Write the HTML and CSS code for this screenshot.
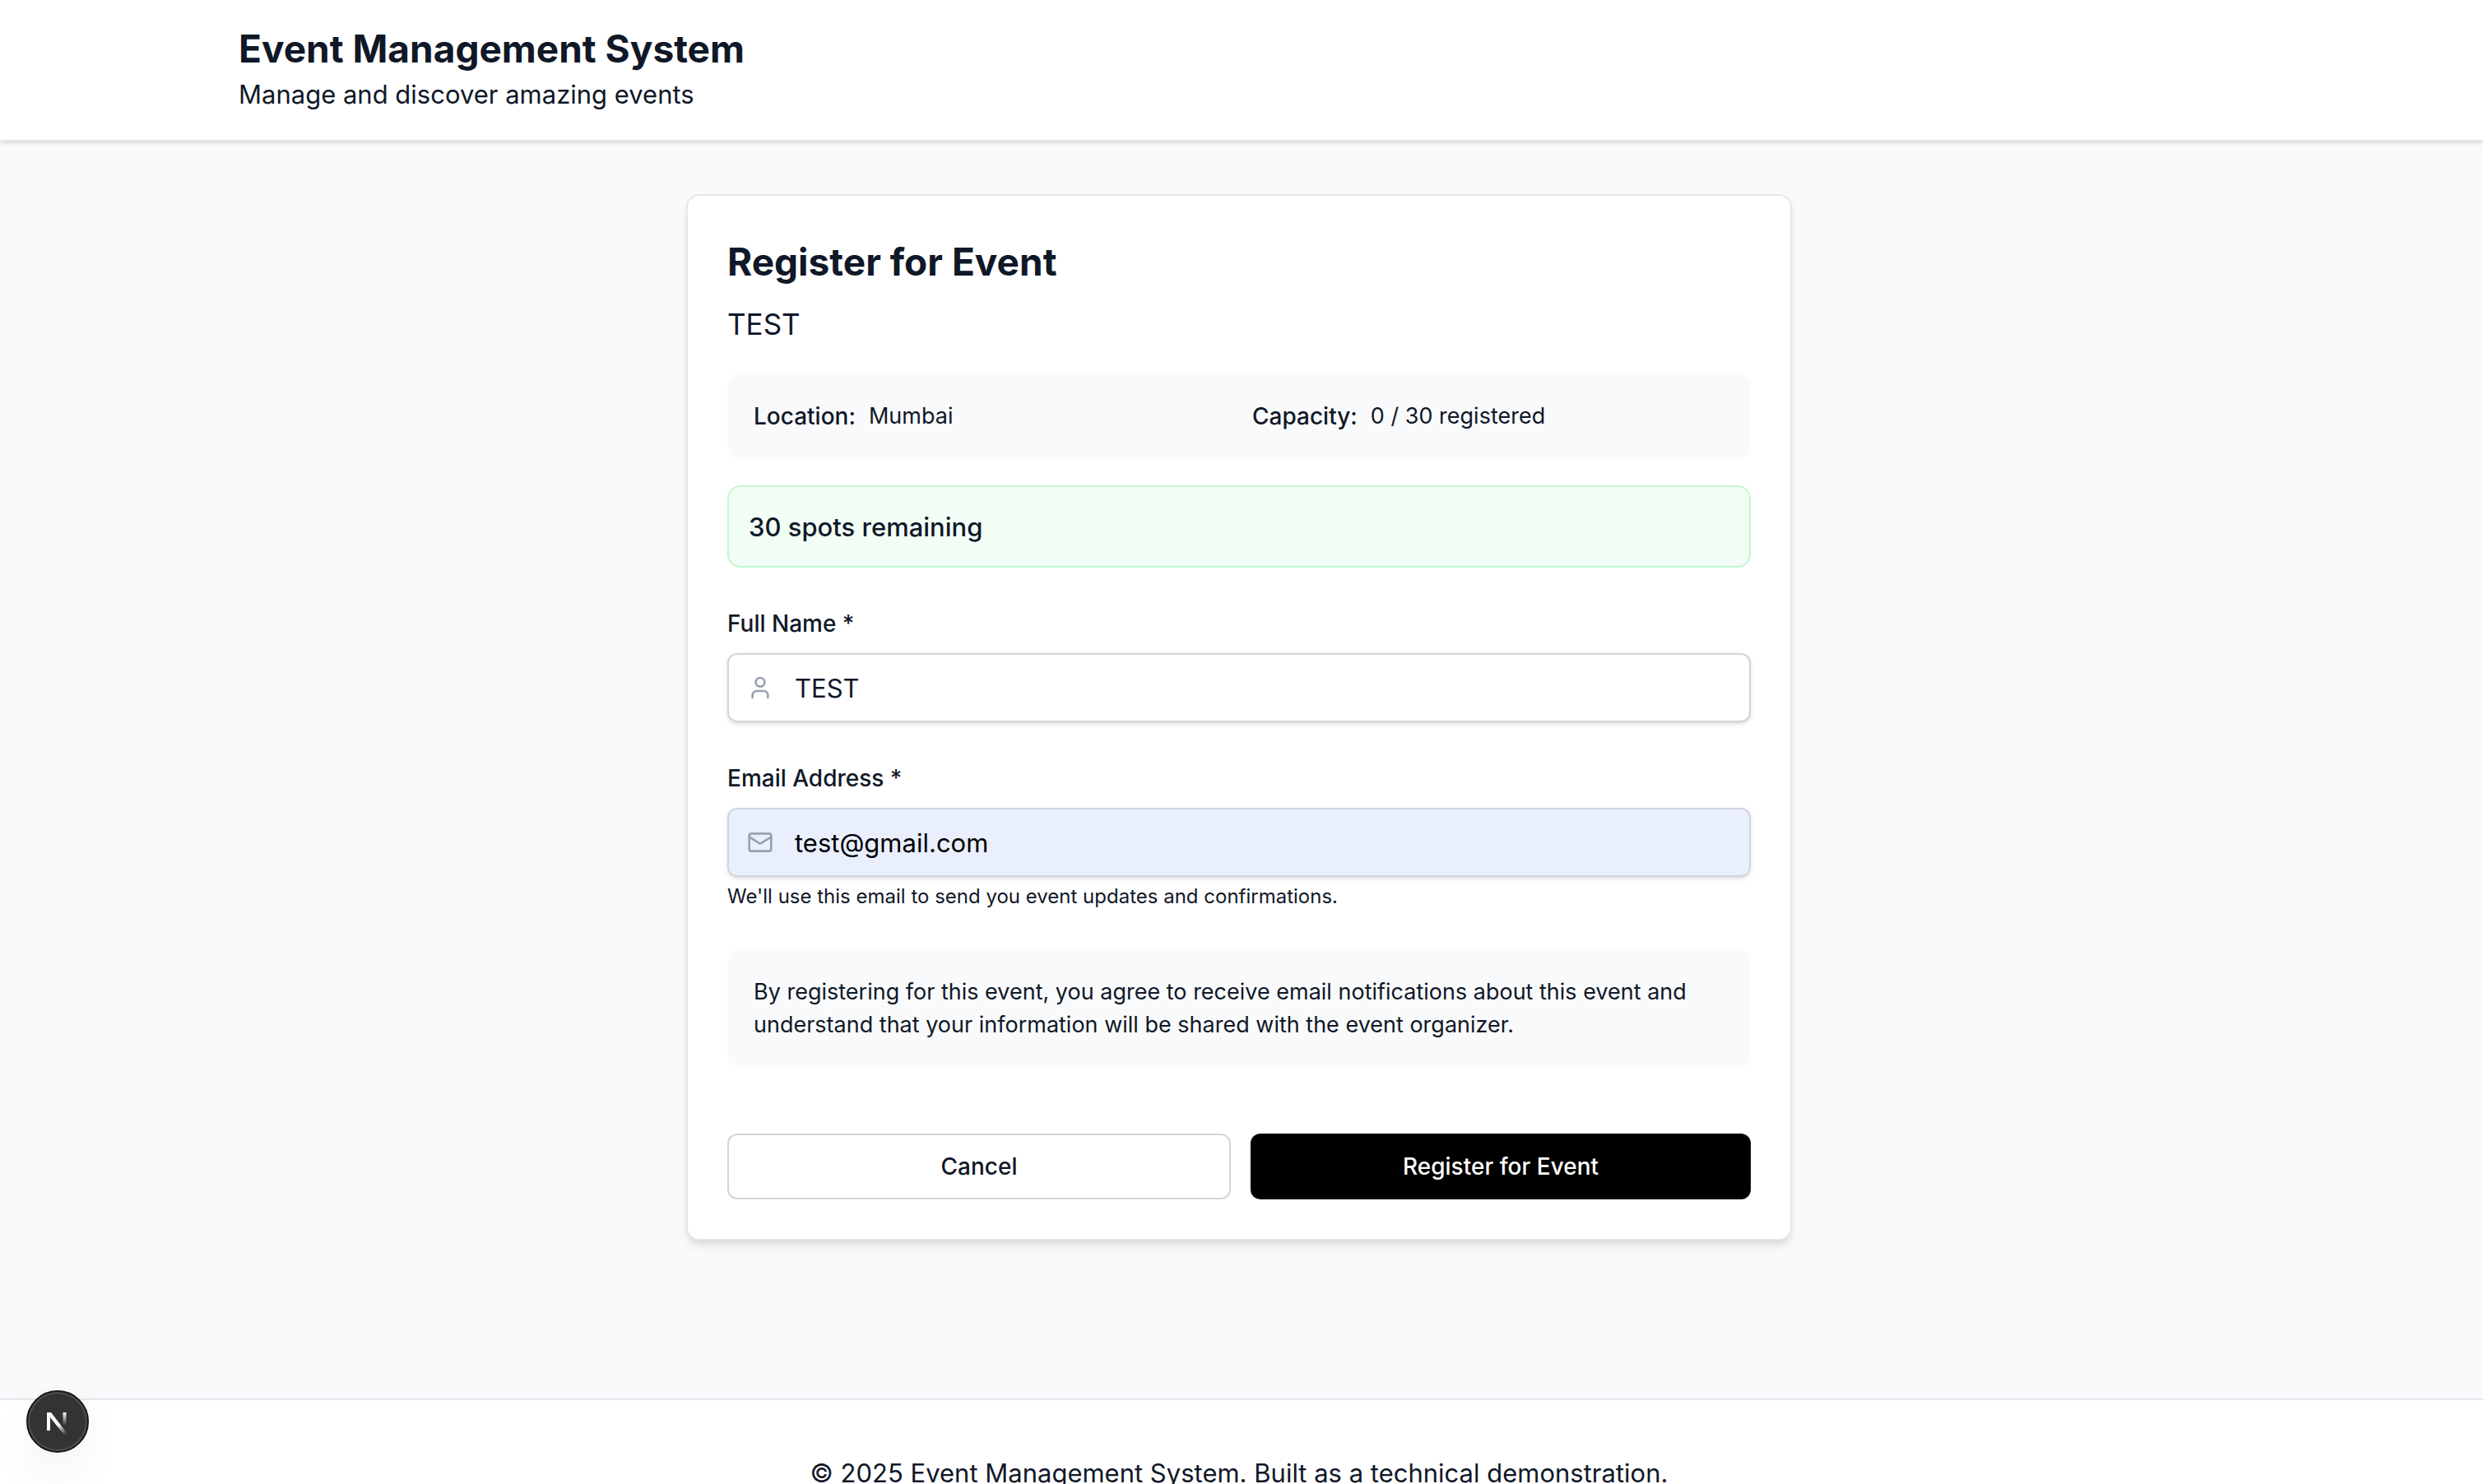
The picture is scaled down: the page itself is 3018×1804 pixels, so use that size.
FILE: index.html
```html
<!DOCTYPE html>
<html lang="en">
<head>
<meta charset="utf-8">
<meta name="viewport" content="width=device-width, initial-scale=1">
<title>Event Management System</title>
<link rel="stylesheet" href="styles.css">
</head>
<body>
<header class="site-header">
  <div class="container">
    <h1 class="site-title">Event Management System</h1>
    <p class="site-tagline">Manage and discover amazing events</p>
  </div>
</header>

<main class="main">
  <section class="card">
    <h2 class="card-title">Register for Event</h2>
    <p class="event-name">TEST</p>

    <dl class="details">
      <div class="detail"><dt>Location:</dt><dd>Mumbai</dd></div>
      <div class="detail"><dt>Capacity:</dt><dd>0 / 30 registered</dd></div>
    </dl>

    <p class="spots">30 spots remaining</p>

    <form class="form">
      <div class="field">
        <label class="label" for="name">Full Name *</label>
        <div class="control">
          <svg class="control-icon" viewBox="0 0 24 24" aria-hidden="true"><path d="M19 21v-2a4 4 0 0 0-4-4H9a4 4 0 0 0-4 4v2"/><circle cx="12" cy="7" r="4"/></svg>
          <input class="input" id="name" type="text" value="TEST">
        </div>
      </div>
      <div class="field">
        <label class="label" for="email">Email Address *</label>
        <div class="control">
          <svg class="control-icon" viewBox="0 0 24 24" aria-hidden="true"><rect x="2" y="4" width="20" height="16" rx="2"/><path d="m22 7-8.991 5.727a2 2 0 0 1-2.009 0L2 7"/></svg>
          <input class="input input-autofilled" id="email" type="email" value="test@gmail.com">
        </div>
        <p class="hint">We'll use this email to send you event updates and confirmations.</p>
      </div>
      <p class="terms">By registering for this event, you agree to receive email notifications about this event and understand that your information will be shared with the event organizer.</p>
      <div class="actions">
        <button class="button button-outline" type="button">Cancel</button>
        <button class="button button-primary" type="submit">Register for Event</button>
      </div>
    </form>
  </section>
</main>

<footer class="site-footer">
  <p>© 2025 Event Management System. Built as a technical demonstration.</p>
</footer>

<button class="dev-badge" type="button" aria-label="Open Next.js Dev Tools">
  <svg class="dev-logo" viewBox="0 0 40 40" fill="none" aria-hidden="true">
    <defs>
      <linearGradient id="fade-diagonal" x1="22" y1="23" x2="31" y2="35" gradientUnits="userSpaceOnUse"><stop stop-color="#fff"/><stop offset="1" stop-color="#fff" stop-opacity="0"/></linearGradient>
      <linearGradient id="fade-stem" x1="28" y1="9" x2="28" y2="25" gradientUnits="userSpaceOnUse"><stop stop-color="#fff"/><stop offset="1" stop-color="#fff" stop-opacity="0"/></linearGradient>
    </defs>
    <path d="M7 9h5l20 26-3 2.500L11 15v16H7z" fill="url(#fade-diagonal)"/>
    <path d="M26.500 9h4v16h-4z" fill="url(#fade-stem)"/>
  </svg>
</button>
</body>
</html>
```
FILE: styles.css
```css
*, *::before, *::after { box-sizing: border-box; }

html { background: #f9fafb; }

body {
  margin: 0;
  background: #f9fafb;
  color: #101828;
  font-family: Inter, "Liberation Sans", sans-serif;
  font-size: 31px;
  line-height: 48px;
}

h1, h2, p, dl, dd { margin: 0; }

.site-header {
  padding: 27px 6px 31px 0;
  background: #fff;
  border-bottom: 2px solid #e5e7eb;
  box-shadow: 0 2px 6px rgb(0 0 0 / 10%), 0 2px 4px -2px rgb(0 0 0 / 10%);
}

.container {
  max-width: 2560px;
  margin: 0 auto;
  padding: 0 64px;
}

.site-title, .card-title {
  font-size: 46px;
  line-height: 64px;
  font-weight: 700;
}

.main {
  padding: 64px 70px 64px 64px;
}

.card {
  max-width: 1344px;
  margin: 0 auto;
  padding: 48px;
  background: #fff;
  border: 2px solid #e5e7eb;
  border-radius: 16px;
  box-shadow: 0 8px 12px -2px rgb(0 0 0 / 10%), 0 4px 8px -4px rgb(0 0 0 / 10%);
}

.event-name {
  margin-top: 16px;
  font-size: 35px;
  line-height: 56px;
}

.details {
  display: grid;
  grid-template-columns: 1fr 1fr;
  gap: 32px;
  margin-top: 32px;
  padding: 32px;
  border-radius: 16px;
  background: #f9fafb;
  font-size: 27px;
  line-height: 40px;
}

.detail { display: flex; gap: 16px; }
.detail dt { font-size: 28px; font-weight: 500; }

.spots {
  margin-top: 32px;
  padding: 25px 24px 23px;
  border: 2px solid #c1f7d2;
  border-radius: 16px;
  background: #f2fdf5;
  font-weight: 500;
}

.form {
  display: flex;
  flex-direction: column;
  gap: 48px;
  margin-top: 48px;
}

.field { display: flex; flex-direction: column; }

.label {
  margin-bottom: 16px;
  font-size: 28px;
  line-height: 40px;
  font-weight: 500;
}

.control { position: relative; }

.control-icon {
  position: absolute;
  top: 26px;
  left: 24px;
  width: 32px;
  height: 32px;
  fill: none;
  stroke: #99a1af;
  stroke-width: 2;
  stroke-linecap: round;
  stroke-linejoin: round;
}

.input {
  display: block;
  width: 100%;
  padding: 17px 24px 15px 80px;
  border: 2px solid #d1d5dc;
  border-radius: 12px;
  background: #fff;
  box-shadow: 0 2px 6px rgb(0 0 0 / 10%), 0 2px 4px -2px rgb(0 0 0 / 10%);
  color: inherit;
  font: inherit;
}

.input-autofilled { background: #e9effd; color: #000; }

.hint {
  margin-top: 8px;
  font-size: 24px;
  line-height: 32px;
}

.terms {
  padding: 32px;
  border-radius: 16px;
  background: #f9fafb;
  font-size: 27px;
  line-height: 40px;
}

.actions {
  display: flex;
  gap: 24px;
  padding-top: 32px;
}

.button {
  flex: 1 1 0;
  padding: 20px 32px;
  border: 0;
  border-radius: 12px;
  font: inherit;
  font-size: 28px;
  line-height: 40px;
  font-weight: 500;
}

.button-outline {
  padding: 18px 32px;
  border: 2px solid #d1d5dc;
  background: #fff;
  color: #101828;
}

.button-primary { background: #000; color: #fff; }

.site-footer {
  margin-top: 128px;
  padding: 65px 70px 64px 64px;
  border-top: 2px solid #e5e7eb;
  background: #fff;
  text-align: center;
}

.dev-badge {
  position: fixed;
  left: 32px;
  bottom: 38px;
  display: grid;
  place-items: center;
  width: 76px;
  height: 76px;
  padding: 0;
  border: 2px solid #171717;
  border-radius: 50%;
  background: #333;
  box-shadow: inset 0 0 0 2px #505050, 0 32px 64px -16px rgb(0 0 0 / 12%), 0 4px 64px rgb(0 0 0 / 3%);
}

.dev-logo { width: 40px; height: 40px; }
```
